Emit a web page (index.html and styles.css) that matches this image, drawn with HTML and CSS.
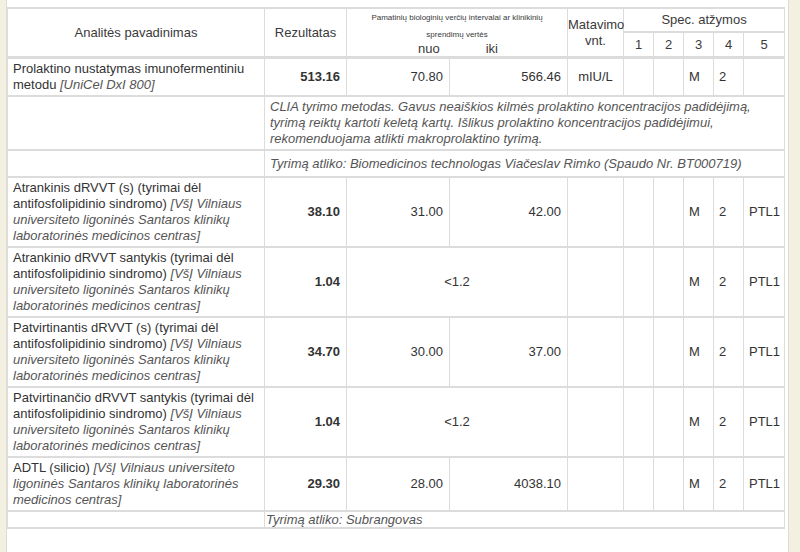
FILE: index.html
```html
<!DOCTYPE html>
<html lang="lt">
<head>
<meta charset="utf-8">
<title>Tyrimų rezultatai</title>
<link rel="stylesheet" href="styles.css">
</head>
<body>
<div class="panel">
  <table class="results">
    <colgroup>
      <col class="c-name"><col class="c-res"><col class="c-nuo"><col class="c-iki"><col class="c-unit">
      <col class="c-s"><col class="c-s"><col class="c-s"><col class="c-s"><col class="c-s5">
    </colgroup>
    <thead>
      <tr class="h1">
        <th rowspan="2">Analitės pavadinimas</th>
        <th rowspan="2">Rezultatas</th>
        <th rowspan="2" colspan="2" class="ref">
          <div class="ref-title">Pamatinių biologinių verčių intervalai ar klinikinių sprendimų vertės</div>
          <div class="ref-sub"><span class="nuo">nuo</span><span class="iki">iki</span></div>
        </th>
        <th rowspan="2" class="unit-h">Matavimo vnt.</th>
        <th colspan="5">Spec. atžymos</th>
      </tr>
      <tr class="h2">
        <th>1</th><th>2</th><th>3</th><th>4</th><th>5</th>
      </tr>
    </thead>
    <tbody>
      <tr>
        <td class="name">Prolaktino nustatymas imunofermentiniu metodu <i>[UniCel DxI 800]</i></td>
        <td class="res">513.16</td>
        <td class="num">70.80</td>
        <td class="num">566.46</td>
        <td class="unit">mIU/L</td>
        <td></td><td></td><td class="sp">M</td><td class="sp">2</td><td class="sp"></td>
      </tr>
      <tr>
        <td></td>
        <td colspan="9" class="note">CLIA tyrimo metodas. Gavus neaiškios kilmės prolaktino koncentracijos padidėjimą, tyrimą reiktų kartoti keletą kartų. Išlikus prolaktino koncentracijos padidėjimui, rekomenduojama atlikti makroprolaktino tyrimą.</td>
      </tr>
      <tr>
        <td></td>
        <td colspan="9" class="note performer">Tyrimą atliko: Biomedicinos technologas Viačeslav Rimko (Spaudo Nr. BT000719)</td>
      </tr>
      <tr>
        <td class="name">Atrankinis dRVVT (s) (tyrimai dėl antifosfolipidinio sindromo) <i>[VšĮ Vilniaus universiteto ligoninės Santaros klinikų laboratorinės medicinos centras]</i></td>
        <td class="res">38.10</td>
        <td class="num">31.00</td>
        <td class="num">42.00</td>
        <td class="unit"></td>
        <td></td><td></td><td class="sp">M</td><td class="sp">2</td><td class="sp">PTL1</td>
      </tr>
      <tr>
        <td class="name">Atrankinio dRVVT santykis (tyrimai dėl antifosfolipidinio sindromo) <i>[VšĮ Vilniaus universiteto ligoninės Santaros klinikų laboratorinės medicinos centras]</i></td>
        <td class="res">1.04</td>
        <td colspan="2" class="range">&lt;1.2</td>
        <td class="unit"></td>
        <td></td><td></td><td class="sp">M</td><td class="sp">2</td><td class="sp">PTL1</td>
      </tr>
      <tr>
        <td class="name">Patvirtinantis dRVVT (s) (tyrimai dėl antifosfolipidinio sindromo) <i>[VšĮ Vilniaus universiteto ligoninės Santaros klinikų laboratorinės medicinos centras]</i></td>
        <td class="res">34.70</td>
        <td class="num">30.00</td>
        <td class="num">37.00</td>
        <td class="unit"></td>
        <td></td><td></td><td class="sp">M</td><td class="sp">2</td><td class="sp">PTL1</td>
      </tr>
      <tr>
        <td class="name">Patvirtinančio dRVVT santykis (tyrimai dėl antifosfolipidinio sindromo) <i>[VšĮ Vilniaus universiteto ligoninės Santaros klinikų laboratorinės medicinos centras]</i></td>
        <td class="res">1.04</td>
        <td colspan="2" class="range">&lt;1.2</td>
        <td class="unit"></td>
        <td></td><td></td><td class="sp">M</td><td class="sp">2</td><td class="sp">PTL1</td>
      </tr>
      <tr>
        <td class="name">ADTL (silicio) <i>[VšĮ Vilniaus universiteto ligoninės Santaros klinikų laboratorinės medicinos centras]</i></td>
        <td class="res">29.30</td>
        <td class="num">28.00</td>
        <td class="num">4038.10</td>
        <td class="unit"></td>
        <td></td><td></td><td class="sp">M</td><td class="sp">2</td><td class="sp">PTL1</td>
      </tr>
      <tr class="sub">
        <td></td>
        <td colspan="9" class="note sub-note">Tyrimą atliko: Subrangovas</td>
      </tr>
    </tbody>
  </table>
</div>
</body>
</html>
```

FILE: styles.css
```css
html, body {
  margin: 0;
  padding: 0;
}
body {
  background: #f3f0e2;
  font-family: "Liberation Sans", Arial, sans-serif;
  font-size: 13px;
  color: #333;
}
.panel {
  margin-left: 6px;
  width: 783px;
  min-height: 552px;
  background: #fff;
  border-left: 1px solid #dedbd0;
  border-right: 1px solid #dedbd0;
  padding-top: 7px;
  box-sizing: border-box;
}
.results {
  table-layout: fixed;
  border-collapse: collapse;
  width: 776px;
  line-height: 16px;
}
.c-name { width: 257px; }
.c-res { width: 82px; }
.c-nuo { width: 103px; }
.c-iki { width: 118px; }
.c-unit { width: 56px; }
.c-s { width: 30px; }
.c-s5 { width: 41px; }

.results th,
.results td {
  border: 1px solid #dcdcdc;
  border-top-width: 2px;
  padding: 2px 5px 2px;
  line-height: 16px;
  vertical-align: middle;
}
.results th {
  font-weight: normal;
  text-align: center;
  padding: 0;
  color: #3a3a3a;
}
.h1 th { height: 22px; }
.h2 th { height: 23px; }
.results thead tr.h2 th { border-bottom-width: 3px; }
.results thead tr.h1 th[rowspan] { border-bottom-width: 3px; }

.results th.ref { vertical-align: top; }
.ref-title {
  font-size: 8px;
  line-height: 17px;
  padding: 0 14px;
}
.ref-sub {
  display: flex;
  line-height: 14px;
  margin-top: -1px;
}
.nuo { margin-left: 71px; }
.iki { margin-left: 46px; }

.name { text-align: left; }
.name i, .note { font-style: italic; color: #555; }
.res { text-align: right; font-weight: bold; }
.results td.res, .results td.num { padding-right: 6px; }
.num { text-align: right; }
.range { text-align: center; }
.results td.unit { text-align: center; padding-left: 0; padding-right: 0; }
.sp { text-align: left; }
.note { text-align: left; }
.results td.performer { padding-top: 5px; padding-bottom: 4px; }
.results td.sub-note { padding: 0 1px; line-height: 15px; }
.sub td { border-bottom-width: 2px; }
```
